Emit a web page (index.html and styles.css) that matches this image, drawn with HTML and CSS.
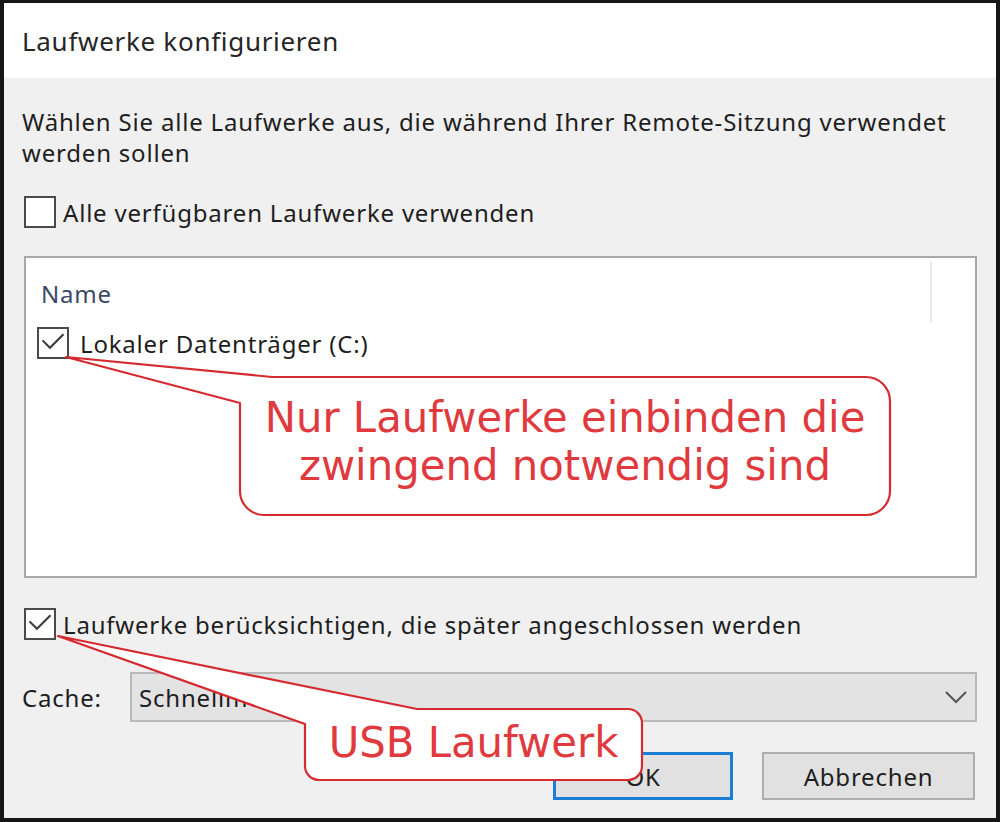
FILE: index.html
```html
<!DOCTYPE html>
<html lang="de">
<head>
<meta charset="utf-8">
<title>Laufwerke konfigurieren</title>
<link rel="stylesheet" href="styles.css">
</head>
<body>
<div class="dialog">
  <div class="titlebar">Laufwerke konfigurieren</div>
  <div class="content">
    <p class="desc">Wählen Sie alle Laufwerke aus, die während Ihrer Remote-Sitzung verwendet<br>werden sollen</p>
    <div class="check-row">
      <span class="cb"></span>
      <span class="cb-label">Alle verfügbaren Laufwerke verwenden</span>
    </div>
    <div class="listbox">
      <div class="list-header">
        <span class="col-name">Name</span>
        <span class="col-sep"></span>
      </div>
      <div class="list-item">
        <span class="cb"><svg class="tick" viewBox="0 0 32 32"><path d="M4 13 L12.5 21.5 L28 6"/></svg></span>
        <span class="item-label">Lokaler Datenträger (C:)</span>
      </div>
    </div>
    <div class="check-row later">
      <span class="cb"><svg class="tick" viewBox="0 0 32 32"><path d="M4 13 L12.5 21.5 L28 6"/></svg></span>
      <span class="cb-label">Laufwerke berücksichtigen, die später angeschlossen werden</span>
    </div>
    <div class="cache-row">
      <span class="cache-label">Cache:</span>
      <div class="select">
        <span class="select-value">Schnellmodus</span>
        <svg class="chevron" viewBox="0 0 22 14"><path d="M1 2 L11 12 L21 2"/></svg>
      </div>
    </div>
    <div class="buttons">
      <div class="btn default">OK</div>
      <div class="btn cancel">Abbrechen</div>
    </div>
  </div>
</div>

<svg class="callouts" viewBox="0 0 1000 822" width="1000" height="822">
  <path class="bubble" d="M66 357 L272 377 H866 A24 24 0 0 1 890 401 V491 A24 24 0 0 1 866 515 H264 A24 24 0 0 1 240 491 V403 Z"/>
  <path class="bubble" d="M58 636 L417 709 H628 A14 14 0 0 1 642 723 V766 A14 14 0 0 1 628 780 H319 A14 14 0 0 1 305 766 V724 Z"/>
</svg>
<div class="callout-text c1">Nur Laufwerke einbinden die<br>zwingend notwendig sind</div>
<div class="callout-text c2">USB Laufwerk</div>
</body>
</html>
```
FILE: styles.css
```css
html, body {
  margin: 0;
  padding: 0;
  background: #ffffff;
}
body {
  position: relative;
  width: 1000px;
  height: 822px;
  overflow: hidden;
  font-family: "Noto Sans", "Open Sans", sans-serif;
  color: #1e1e1e;
}
.dialog {
  box-sizing: border-box;
  width: 1000px;
  height: 822px;
  border: 4px solid #161616;
  border-top-width: 3px;
  display: flex;
  flex-direction: column;
  background: #f0f0f0;
}
.titlebar {
  height: 75px;
  flex: none;
  background: #ffffff;
  padding-left: 18px;
  display: flex;
  align-items: center;
  font-size: 26px;
  letter-spacing: 0.7px;
  color: #262626;
}
.content {
  flex: 1;
  padding: 28px 19px 0 18px;
  display: flex;
  flex-direction: column;
  font-size: 24px;
  letter-spacing: 0.8px;
}
.desc {
  margin: 0;
  line-height: 31px;
}
.check-row {
  margin-top: 28px;
  height: 32px;
  display: flex;
  align-items: center;
  margin-left: 2px;
}
.check-row.later {
  margin-top: 30px;
}
.cb {
  box-sizing: border-box;
  width: 32px;
  height: 32px;
  flex: none;
  border: 2px solid #4a4a4a;
  background: #ffffff;
  display: flex;
}
.tick {
  width: 28px;
  height: 28px;
  fill: none;
  stroke: #3a3a3a;
  stroke-width: 2.4;
}
.cb-label {
  margin-left: 7px;
}
.listbox {
  box-sizing: border-box;
  margin-top: 28px;
  margin-left: 2px;
  height: 322px;
  background: #ffffff;
  border: 2px solid #a9a9a9;
  display: flex;
  flex-direction: column;
}
.list-header {
  height: 64px;
  display: flex;
}
.col-name {
  width: 889px;
  padding-left: 15px;
  padding-top: 19px;
  color: #3c4866;
}
.col-sep {
  width: 2px;
  margin-top: 4px;
  background: #e8e8e8;
}
.list-item {
  margin-top: 5px;
  padding-left: 11px;
  display: flex;
  align-items: center;
  height: 32px;
}
.item-label {
  margin-left: 11px;
}
.cache-row {
  margin-top: 32px;
  height: 50px;
  display: flex;
  align-items: center;
}
.cache-label {
  flex: none;
}
.select {
  box-sizing: border-box;
  margin-left: auto;
  width: 847px;
  height: 50px;
  background: #e3e3e3;
  border: 2px solid #b9b9b9;
  display: flex;
  align-items: center;
  padding-left: 7px;
  padding-right: 8px;
}
.select-value {
  flex: 1;
}
.chevron {
  width: 22px;
  height: 14px;
  fill: none;
  stroke: #555555;
  stroke-width: 2;
}
.buttons {
  margin-top: 30px;
  display: flex;
  justify-content: flex-end;
  gap: 29px;
  padding-right: 2px;
}
.btn {
  box-sizing: border-box;
  height: 48px;
  display: flex;
  align-items: center;
  justify-content: center;
  background: #e1e1e1;
  border: 2px solid #adadad;
}
.btn.default {
  width: 180px;
  border: 3px solid #1a7fd4;
}
.btn.cancel {
  width: 213px;
}
.callouts {
  position: absolute;
  left: 0;
  top: 0;
}
.bubble {
  fill: #ffffff;
  stroke: #d52a30;
  stroke-width: 2.2;
  stroke-linejoin: round;
}
.callout-text {
  position: absolute;
  font-family: "DejaVu Sans", sans-serif;
  font-size: 41.8px;
  line-height: 48px;
  color: #e03a3f;
  text-align: center;
  white-space: nowrap;
}
.c1 {
  left: 240px;
  width: 650px;
  top: 394px;
}
.c2 {
  left: 305px;
  width: 337px;
  top: 719px;
}
```
